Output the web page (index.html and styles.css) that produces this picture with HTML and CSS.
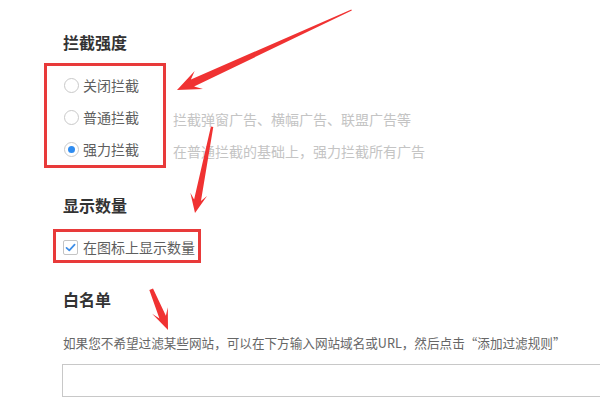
FILE: index.html
```html
<!DOCTYPE html>
<html lang="zh-CN">
<head>
<meta charset="UTF-8">
<meta name="viewport" content="width=device-width, initial-scale=1.0">
<title>广告过滤设置</title>
<link rel="stylesheet" href="styles.css">
</head>
<body>
<div class="settings">
  <h3 class="section-title">拦截强度</h3>
  <div class="mode-row">
    <div class="mode-box mark">
      <label class="option"><span class="radio"></span>关闭拦截</label>
      <label class="option"><span class="radio"></span>普通拦截</label>
      <label class="option"><span class="radio checked"></span>强力拦截</label>
    </div>
    <div class="mode-desc">
      <p></p>
      <p>拦截弹窗广告、横幅广告、联盟广告等</p>
      <p>在普通拦截的基础上，强力拦截所有广告</p>
    </div>
  </div>

  <h3 class="section-title count-title">显示数量</h3>
  <label class="count-box mark">
    <span class="checkbox">
      <svg width="15" height="15" viewBox="0 0 15 15"><polyline points="3.5,7.8 6.3,10.4 11.6,4.6" fill="none" stroke="#3d8ee8" stroke-width="1.7" stroke-linecap="round" stroke-linejoin="round"/></svg>
    </span>在图标上显示数量
  </label>

  <h3 class="section-title white-title">白名单</h3>
  <p class="white-hint">如果您不希望过滤某些网站，可以在下方输入网站域名或URL，然后点击“添加过滤规则”</p>
  <input class="white-input" type="text">
</div>

<!-- annotation arrows drawn over the page -->
<svg class="arrows" width="600" height="400" viewBox="0 0 600 400">
  <polygon transform="translate(177 90) rotate(155.4)" points="-192,-0.6 -17,-3.8 -24,-10 0,0 -24,10 -17,3.8 -192,0.6" fill="#f03232"/>
  <polygon transform="translate(195 213) rotate(101.2)" points="-88,-1.2 -13,-3.5 -19,-8.5 0,0 -19,8.5 -13,3.5 -88,1.2" fill="#f03232"/>
  <polygon transform="translate(168 330) rotate(67.5)" points="-44,-2 -14,-3.5 -21,-8.5 0,0 -21,8.5 -14,3.5 -44,2" fill="#f03232"/>
</svg>
</body>
</html>
```

FILE: styles.css
```css
body {
  margin: 0;
  background-color: #fff;
  font-family: "Noto Sans CJK SC", "Noto Sans", sans-serif;
  overflow: hidden;
}
.settings {
  padding: 30px 0 0 63px;
}
.section-title {
  margin: 0;
  font-size: 16px;
  line-height: 24px;
  font-weight: bold;
  color: #333;
}
.mark {
  border: 3px solid #e83a3a;
  box-sizing: border-box;
}
.mode-row {
  display: flex;
  margin-top: 9px;
}
.mode-box {
  width: 122px;
  margin-left: -19px;
  padding: 3px 0 0 17px;
}
.option {
  display: flex;
  align-items: center;
  height: 32px;
  font-size: 14px;
  color: #5e5e5e;
}
.radio {
  width: 15px;
  height: 15px;
  border: 1px solid #c9c9c9;
  border-radius: 50%;
  box-sizing: border-box;
  margin-right: 4px;
  display: flex;
  justify-content: center;
  align-items: center;
}
.radio.checked::after {
  content: "";
  width: 7px;
  height: 7px;
  border-radius: 50%;
  background-color: #2f8cf0;
}
.mode-desc {
  margin-left: 7px;
  padding-top: 8px;
}
.mode-desc p {
  margin: 0;
  height: 32px;
  line-height: 32px;
  font-size: 14px;
  color: #c4c4c4;
}
.count-title {
  margin-top: 25px;
}
.count-box {
  display: inline-flex;
  align-items: center;
  height: 34px;
  margin: 12px 0 0 -10px;
  padding: 2px 3px 0 7px;
  font-size: 14px;
  color: #5e5e5e;
}
.checkbox {
  width: 15px;
  height: 15px;
  border: 1px solid #c4c4c4;
  border-radius: 2px;
  box-sizing: border-box;
  margin-right: 5px;
  display: flex;
}
.checkbox svg {
  margin: -1px;
}
.white-title {
  margin-top: 24px;
}
.white-hint {
  margin: 22px 0 0;
  font-size: 12.6px;
  line-height: 20px;
  color: #666;
}
.white-input {
  display: block;
  width: 560px;
  height: 33px;
  margin: 11px 0 0 -1px;
  border: 1px solid #c8c8c8;
  box-sizing: border-box;
  padding: 0 8px;
}
.arrows {
  position: absolute;
  top: 0;
  left: 0;
  pointer-events: none;
}
```
